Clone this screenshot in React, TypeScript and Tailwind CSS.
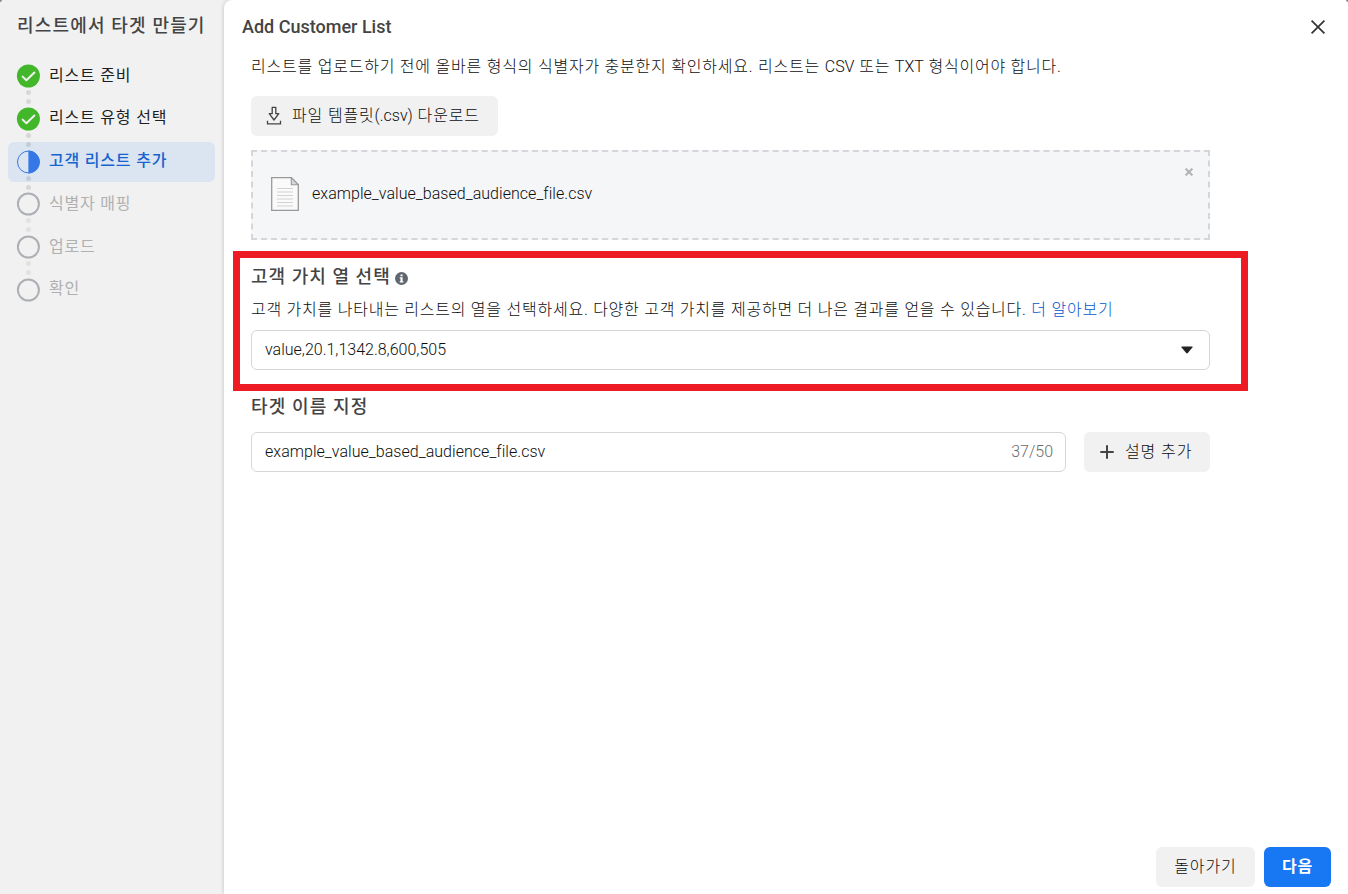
import React from "react";
import clsx from "clsx";

type StepState = "done" | "current" | "todo";

interface Step {
  label: string;
  state: StepState;
}

const STEPS: Step[] = [
  { label: "리스트 준비", state: "done" },
  { label: "리스트 유형 선택", state: "done" },
  { label: "고객 리스트 추가", state: "current" },
  { label: "식별자 매핑", state: "todo" },
  { label: "업로드", state: "todo" },
  { label: "확인", state: "todo" },
];

const StepIcon: React.FC<{ state: StepState }> = ({ state }) => (
  <svg viewBox="0 0 24 24" className="block h-6 w-6" fill="none">
    {state === "done" && (
      <>
        <circle cx="12.4" cy="12" r="11.5" fill="#42b72a" />
        <path
          d="M6.6 12.6l3.8 3.7 8-7.8"
          stroke="#f1f1f1"
          strokeWidth="2"
          strokeLinecap="round"
          strokeLinejoin="round"
        />
      </>
    )}
    {state === "current" && (
      <>
        <circle cx="12.4" cy="12" r="10.9" stroke="#3578e5" strokeWidth="1" />
        <path d="M12.4 .6a11.4 11.4 0 0 1 0 22.8z" fill="#3578e5" />
      </>
    )}
    {state === "todo" && <circle cx="12.4" cy="12" r="10.5" stroke="#acafb4" strokeWidth="2" />}
  </svg>
);

const Sidebar: React.FC = () => (
  <aside className="w-56 shrink-0 px-2 pt-[9px]">
    <h1 className="h-[34px] pl-[9px] text-[18px] leading-[34px] font-medium tracking-[1.17px] whitespace-nowrap text-[#444]">
      리스트에서 타겟 만들기
    </h1>
    <ol className="mt-[13.3px] flex flex-col gap-[2.7px]">
      {STEPS.map((step, i) => (
        <li
          key={step.label}
          className={clsx(
            "flex h-10 w-[207px] items-center rounded-md pl-2",
            step.state === "current" && "bg-[#dbe5f1]"
          )}
        >
          <span className="relative">
            <StepIcon state={step.state} />
            {/* Connector to the next step */}
            {i < STEPS.length - 1 && (
              <span
                className={clsx(
                  "absolute top-[26px] left-[10px] z-10 flex flex-col gap-1",
                  step.state === "todo" ? "opacity-[0.06]" : "opacity-10"
                )}
              >
                <i className="h-[5px] w-[5px] rounded-full bg-black" />
                <i className="h-[5px] w-[5px] rounded-full bg-black" />
              </span>
            )}
          </span>
          <span
            className={clsx(
              "ml-[9px] pb-px text-[16px] leading-6 tracking-[0.8px] whitespace-nowrap",
              step.state === "done" && "text-[#1c1e21]",
              step.state === "current" && "font-medium text-[#1763cf]",
              step.state === "todo" && "text-[#b0b0b0]"
            )}
          >
            {step.label}
          </span>
        </li>
      ))}
    </ol>
  </aside>
);

const DownloadIcon = () => (
  <svg viewBox="0 0 16 20" className="h-5 w-4" fill="none" stroke="#444" strokeWidth="1.3">
    <path d="M6.2 1.3h3.6v6.4h3L8 14 3.2 7.7h3z" strokeLinejoin="round" />
    <path d="M1.5 14.8v3h13v-3" />
  </svg>
);

const FileIcon = () => (
  <svg viewBox="0 0 28 34" className="h-[34px] w-7" fill="none">
    <path d="M.7.7h19.6l7 7v25.6H.7z" fill="#fafafa" stroke="#999" strokeWidth="1.3" />
    <path d="M20.3.7v7h7z" fill="#d8d8d8" stroke="#999" strokeWidth="1.1" />
    <path
      d="M6 11.5h16M6 15h16M6 18.5h16M6 22h16M6 25.5h16M6 29h16"
      stroke="#d2d2d2"
      strokeWidth="1.2"
    />
  </svg>
);

const InfoIcon = () => (
  <svg viewBox="0 0 13 13" className="h-[13px] w-[13px]">
    <circle cx="6.5" cy="6.5" r="6.5" fill="#606770" />
    <path d="M4.7 5.3h2.9v4h.8v1.1H4.7V9.3h.8V6.4h-.8zM5.5 2.4h2.1v1.9H5.5z" fill="#fff" />
  </svg>
);

export default function App() {
  return (
    <div className="relative flex h-[894px] w-[1348px] overflow-hidden bg-[#f1f1f1] font-[Roboto,'Noto_Sans_CJK_KR',sans-serif] text-[16px] text-[#0c0d0e]">
      <Sidebar />
      <main className="flex flex-1 flex-col rounded-tl-lg bg-white font-light shadow-[0_0_4px_rgba(0,0,0,0.2)]">
        {/* Header */}
        <header className="flex h-[54px] items-center justify-between pr-[22px] pl-[18px]">
          <h2 className="pb-0.5 text-[18px] font-medium text-[#444]">Add Customer List</h2>
          <button aria-label="Close">
            <svg viewBox="0 0 16 16" className="h-4 w-4" stroke="#333" strokeWidth="1.7">
              <path d="M1.6 1.6l12.8 12.8M14.4 1.6L1.6 14.4" />
            </svg>
          </button>
        </header>

        {/* Upload */}
        <section className="w-[986px] pl-[27px]">
          <p className="h-6 pt-px leading-6 tracking-[0.78px] whitespace-nowrap">
            리스트를 업로드하기 전에 올바른 형식의 식별자가 충분한지 확인하세요. 리스트는{" "}
            <span className="tracking-normal">CSV</span> 또는{" "}
            <span className="tracking-normal">TXT</span> 형식이어야 합니다.
          </p>
          <button className="mt-[18px] flex h-10 w-[247px] items-center rounded-md bg-[#f1f1f1] pl-[15px] whitespace-nowrap">
            <DownloadIcon />
            <span className="ml-[10px] pb-px tracking-[0.85px]">
              파일 템플릿<span className="tracking-normal">(.csv)</span> 다운로드
            </span>
          </button>
          <div className="relative mt-[14px] flex h-[90px] items-center border-2 border-dashed border-[#d4d6da] bg-[#f5f6f8] pl-[18px]">
            <span className="pb-0.5">
              <FileIcon />
            </span>
            <span className="ml-[13px] pb-0.5 tracking-[0.04px]">
              example_value_based_audience_file.csv
            </span>
            <svg
              viewBox="0 0 8 8"
              className="absolute top-[15.5px] right-[15px] h-2 w-2"
              stroke="#b0b2b5"
              strokeWidth="2"
            >
              <path d="M.6.6l6.8 6.8M7.4.6L.6 7.4" />
            </svg>
          </div>
        </section>

        {/* Value column */}
        <section className="mt-[11px] ml-[9px] h-[140px] w-[1015px] border-[7px] border-[#ed1c24] pt-[6px] pr-[31px] pl-[11px]">
          <h3 className="flex h-6 items-center text-[18px] font-medium text-[#444]">
            <span className="tracking-[1.05px]">고객 가치 열 선택</span>
            <span className="mt-1 ml-1">
              <InfoIcon />
            </span>
          </h3>
          <p className="mt-[9px] h-6 pt-px leading-6 tracking-[0.76px] whitespace-nowrap">
            고객 가치를 나타내는 리스트의 열을 선택하세요. 다양한 고객 가치를 제공하면 더 나은 결과를
            얻을 수 있습니다. <a className="text-[#0457cb]">더 알아보기</a>
          </p>
          <div className="mt-[9px] flex h-10 items-center justify-between rounded-md border border-[#d6d6d6] pr-4 pl-[13px]">
            <span>value,20.1,1342.8,600,505</span>
            <svg viewBox="0 0 12 8" className="h-2 w-3" fill="#222">
              <path d="M1 .5h10q1 0 .4.9L6.8 7q-.8.9-1.6 0L.6 1.4Q0 .5 1 .5z" />
            </svg>
          </div>
        </section>

        {/* Audience name */}
        <section className="w-[986px] pt-1 pl-[27px]">
          <h3 className="h-6 text-[18px] leading-6 font-medium tracking-[1.15px] text-[#444]">
            타겟 이름 지정
          </h3>
          <div className="mt-[13px] flex gap-[18px]">
            <div className="flex h-10 w-[815px] items-center justify-between rounded-md border border-[#d6d6d6] pr-3 pl-[13px]">
              <span className="tracking-[0.04px]">example_value_based_audience_file.csv</span>
              <span className="text-[#6c6c6c]">37/50</span>
            </div>
            <button className="flex h-10 flex-1 items-center rounded-md bg-[#f1f1f1] pl-4 whitespace-nowrap">
              <svg viewBox="0 0 14 14" className="h-[14px] w-[14px]" stroke="#444" strokeWidth="2">
                <path d="M7 .3v13.4M.3 7h13.4" />
              </svg>
              <span className="ml-[11px] pb-px tracking-[0.9px]">설명 추가</span>
            </button>
          </div>
        </section>

        {/* Footer */}
        <footer className="mt-auto flex justify-end gap-[9px] pr-[17px] pb-[7px]">
          <button className="h-10 w-[99px] rounded-md bg-[#f1f1f1] pb-px tracking-[0.9px]">
            돌아가기
          </button>
          <button className="h-10 w-[67px] rounded-md bg-[#1877f2] pb-px font-bold tracking-[0.8px] text-white">
            다음
          </button>
        </footer>
      </main>

      {/* Backdrop showing at the rounded dialog corners */}
      <i className="absolute top-0 left-0 h-[2px] w-[2px] rounded-br-full bg-[#8a8a8a]" />
      <i className="absolute top-0 right-0 h-[2px] w-[2px] rounded-bl-full bg-[#8a8a8a]" />
    </div>
  );
}
